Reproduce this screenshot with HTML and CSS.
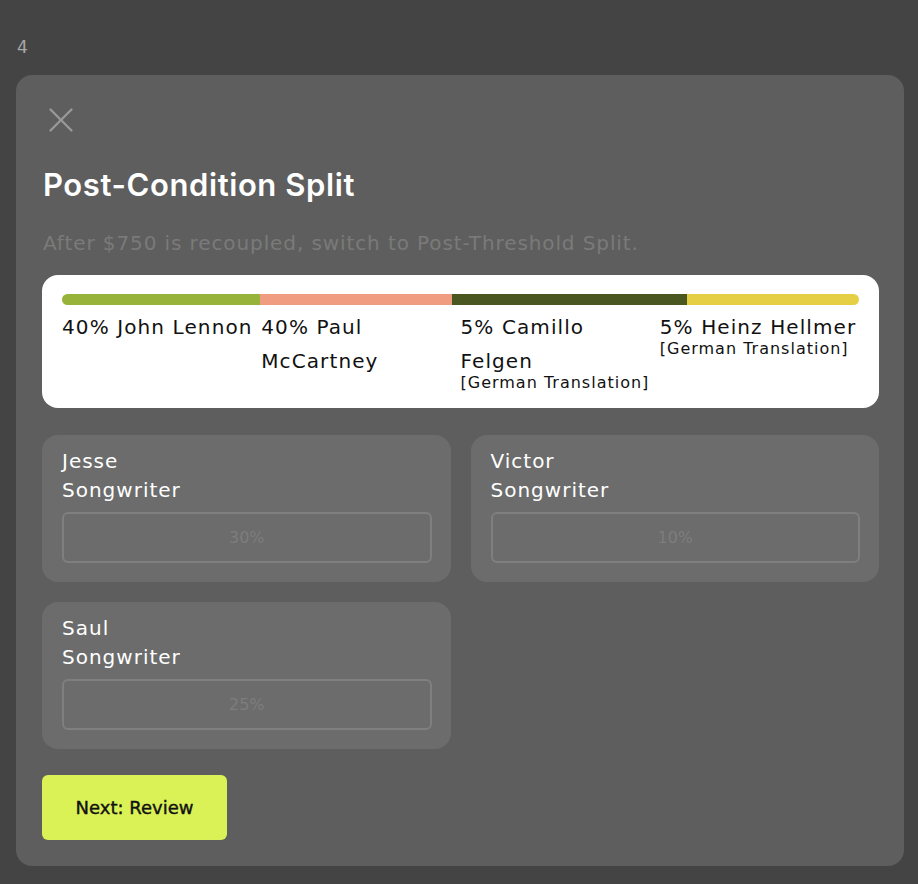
FILE: index.html
```html
<!DOCTYPE html>
<html>
<head>
<meta charset="utf-8">
<link rel="stylesheet" href="styles.css">
</head>
<body>
<div class="page">
  <div class="step">4</div>
  <div class="modal">
    <button class="close" aria-label="Close">
      <svg width="24" height="24" viewBox="0 0 24 24"><path d="M1.5 1.5 L22.5 22.5 M22.5 1.5 L1.5 22.5" stroke="#9a9a9a" stroke-width="2.2" stroke-linecap="round"/></svg>
    </button>
    <h1 class="title">Post-Condition Split</h1>
    <p class="subtitle">After $750 is recoupled, switch to Post-Threshold Split.</p>
    <div class="split-card">
      <div class="bar">
        <span class="seg seg-green" style="width:24.85%"></span>
        <span class="seg seg-pink" style="width:24.1%"></span>
        <span class="seg seg-olive" style="width:29.5%"></span>
        <span class="seg seg-yellow" style="width:21.55%"></span>
      </div>
      <div class="labels">
        <div class="label"><div class="name">40% John Lennon</div></div>
        <div class="label"><div class="name">40% Paul McCartney</div></div>
        <div class="label"><div class="name">5% Camillo Felgen</div><div class="note">[German Translation]</div></div>
        <div class="label"><div class="name">5% Heinz Hellmer</div><div class="note">[German Translation]</div></div>
      </div>
    </div>
    <div class="grid">
      <div class="person">
        <div class="pname">Jesse</div>
        <div class="prole">Songwriter</div>
        <div class="input">30%</div>
      </div>
      <div class="person">
        <div class="pname">Victor</div>
        <div class="prole">Songwriter</div>
        <div class="input">10%</div>
      </div>
      <div class="person">
        <div class="pname">Saul</div>
        <div class="prole">Songwriter</div>
        <div class="input">25%</div>
      </div>
    </div>
    <button class="next">Next: Review</button>
  </div>
</div>
</body>
</html>
```

FILE: styles.css
```css
* { box-sizing: border-box; }
html, body { margin: 0; padding: 0; }
body {
  background: #444444;
  font-family: "DejaVu Sans", "Liberation Sans", sans-serif;
  width: 918px;
  height: 884px;
  overflow: hidden;
}
.page {
  padding: 34px 14px 0 16px;
}
.step {
  color: #a8a8a8;
  font-size: 17px;
  line-height: 26px;
  padding-left: 1px;
  margin-bottom: 15px;
}
.modal {
  background: #5e5e5e;
  border-radius: 16px;
  padding: 33px 25px 25px 26px;
  height: 791px;
}
.close {
  background: none;
  border: 0;
  padding: 0;
  margin: 0 0 0 7px;
  width: 24px;
  height: 24px;
  display: block;
}
.title {
  margin: 35px 0 0 1px;
  color: #ffffff;
  font-family: "Inter", sans-serif;
  font-weight: 600;
  font-size: 31px;
  line-height: 36px;
  letter-spacing: 0.6px;
}
.subtitle {
  margin: 27px 0 0 1px;
  color: #7a7a7a;
  font-size: 20px;
  line-height: 26px;
  letter-spacing: 0.9px;
}
.split-card {
  margin-top: 19px;
  background: #ffffff;
  border-radius: 16px;
  padding: 19px 20px 17px 20px;
}
.bar {
  display: flex;
  height: 11px;
  border-radius: 6px;
  overflow: hidden;
}
.seg { display: block; height: 100%; }
.seg-green { background: #98b33a; }
.seg-pink { background: #f09c80; }
.seg-olive { background: #4b5721; }
.seg-yellow { background: #e5cf45; }
.labels {
  display: grid;
  grid-template-columns: repeat(4, 1fr);
  margin-top: 5px;
}
.label { color: #111111; }
.name {
  font-size: 20px;
  line-height: 34px;
  letter-spacing: 1.1px;
}
.note {
  font-size: 16px;
  line-height: 16px;
  letter-spacing: 1px;
  margin-top: -3px;
}
.grid {
  margin-top: 27px;
  display: grid;
  grid-template-columns: 1fr 1fr;
  gap: 20px;
}
.person {
  background: #6c6c6c;
  border-radius: 16px;
  padding: 12px 19px 19px 20px;
}
.pname, .prole {
  color: #ffffff;
  font-size: 20px;
  line-height: 29px;
  letter-spacing: 1px;
}
.input {
  margin-top: 7px;
  height: 51px;
  border: 2px solid #7f7f7f;
  border-radius: 6px;
  color: #7d7d7d;
  font-size: 16px;
  display: flex;
  align-items: center;
  justify-content: center;
}
.next {
  margin-top: 26px;
  width: 185px;
  height: 65px;
  background: #dbf257;
  border: 0;
  border-radius: 6px;
  color: #111111;
  font-family: "DejaVu Sans", sans-serif;
  font-weight: 400;
  -webkit-text-stroke: 0.4px #111111;
  font-size: 18px;
  display: block;
}
```
